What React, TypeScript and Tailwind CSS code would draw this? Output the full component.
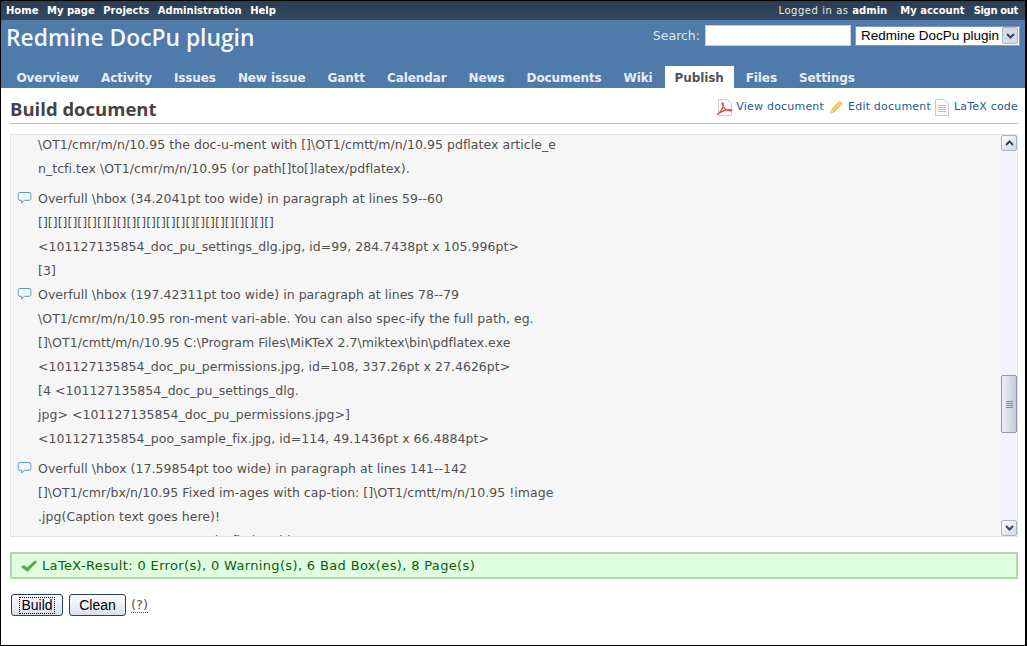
const V = '"DejaVu Sans", sans-serif';

function Line({ text, icon, gap }: { text: string; icon?: boolean; gap?: boolean }) {
  return (
    <div className={`relative h-[24px] pl-[27px] leading-[24px] whitespace-pre ${gap ? 'mt-[6px]' : ''}`}>
      {icon && <Bubble />}
      {text}
    </div>
  );
}

function Bubble() {
  return (
    <svg className="absolute left-[6px] top-[4px]" width="15" height="14" viewBox="0 0 15 14">
      <path d="M3 1.500h9a1.800 1.800 0 0 1 1.800 1.800v4.200a1.800 1.800 0 0 1-1.800 1.800H7.500l-3 2.700.4-2.700H3A1.800 1.800 0 0 1 1.200 7.500V3.300A1.800 1.800 0 0 1 3 1.500z" fill="#f2f8fd" stroke="#5b9bd0" strokeWidth="1" />
    </svg>
  );
}

function PdfIcon() {
  return (
    <svg width="17" height="17" viewBox="0 0 17 17">
      <path d="M2.500.500h9l4 4v12h-13z" fill="#fdfbfb" stroke="#d2cccc" />
      <path d="M1 15.500c3.500-1.500 6-6 6.300-10 .1-2-1.200-2-1.100-.5.300 3.500 4 6.800 8.800 6.800 1 0 1-1.100 0-1.100-3.500-.2-8.500 1-14 4.800z" fill="none" stroke="#d0564a" strokeWidth="1.300" />
    </svg>
  );
}

function PencilIcon() {
  return (
    <svg width="14" height="15" viewBox="0 0 14 15">
      <path d="M10.500 1.500l2.500 2L4.800 12 1.500 13.500l1-3.600z" fill="#f5d563" stroke="#c99b2e" strokeWidth="0.800" />
      <path d="M2.500 10l2.300 2-3.300 1.500z" fill="#efe2bd" />
    </svg>
  );
}

function DocIcon() {
  return (
    <svg width="14" height="17" viewBox="0 0 14 17">
      <path d="M.500.500h9l4 4v12H.500z" fill="#fafafa" stroke="#c8c8c8" />
      <path d="M3 6.500h8M3 8.500h8M3 10.500h8M3 12.500h8" stroke="#c4c4c4" />
    </svg>
  );
}

function Check() {
  return (
    <svg width="18" height="14" viewBox="0 0 18 14">
      <path d="M1 8l3-2 3 2.500L15 1.500l2 1.500-9.500 9.800z" fill="#5aa64e" stroke="#93c98a" strokeWidth="0.600" />
    </svg>
  );
}

function Chevron({ up }: { up?: boolean }) {
  return (
    <svg width="9" height="6" viewBox="0 0 9 6">
      <path d={up ? 'M1 5l3.500-3.500L8 5' : 'M1 1l3.500 3.500L8 1'} fill="none" stroke="#3b4358" strokeWidth="2" />
    </svg>
  );
}

function ScrollBtn({ up }: { up?: boolean }) {
  return (
    <div className="flex h-[16px] w-[16px] shrink-0 items-center justify-center rounded-[2px] border border-[#a9b4c4] bg-[linear-gradient(135deg,#fdfdfd,#cfd8e6)]">
      <Chevron up={up} />
    </div>
  );
}

const tabs = ['Overview', 'Activity', 'Issues', 'New issue', 'Gantt', 'Calendar', 'News', 'Documents', 'Wiki', 'Publish', 'Files', 'Settings'];

const lines: { t: string; i?: boolean; g?: boolean }[] = [
  { t: '\\OT1/cmr/m/n/10.95 the doc-u-ment with []\\OT1/cmtt/m/n/10.95 pdflatex article_e' },
  { t: 'n_tcfi.tex \\OT1/cmr/m/n/10.95 (or path[]to[]latex/pdflatex).' },
  { t: 'Overfull \\hbox (34.2041pt too wide) in paragraph at lines 59--60', i: true, g: true },
  { t: '[][][][][][][][][][][][][][][][][][][][][][][][]' },
  { t: '<101127135854_doc_pu_settings_dlg.jpg, id=99, 284.7438pt x 105.996pt>' },
  { t: '[3]' },
  { t: 'Overfull \\hbox (197.42311pt too wide) in paragraph at lines 78--79', i: true },
  { t: '\\OT1/cmr/m/n/10.95 ron-ment vari-able. You can also spec-ify the full path, eg.' },
  { t: '[]\\OT1/cmtt/m/n/10.95 C:\\Program Files\\MiKTeX 2.7\\miktex\\bin\\pdflatex.exe' },
  { t: '<101127135854_doc_pu_permissions.jpg, id=108, 337.26pt x 27.4626pt>' },
  { t: '[4 <101127135854_doc_pu_settings_dlg.' },
  { t: 'jpg> <101127135854_doc_pu_permissions.jpg>]' },
  { t: '<101127135854_poo_sample_fix.jpg, id=114, 49.1436pt x 66.4884pt>' },
  { t: 'Overfull \\hbox (17.59854pt too wide) in paragraph at lines 141--142', i: true, g: true },
  { t: '[]\\OT1/cmr/bx/n/10.95 Fixed im-ages with cap-tion: []\\OT1/cmtt/m/n/10.95 !image' },
  { t: '.jpg(Caption text goes here)!' },
  { t: '<101127135854_poo_sample_fix.jpg, id=117, 49.1436pt x 66.4884pt>' },
];

export default function App() {
  return (
    <div className="flex h-[646px] w-[1027px] flex-col overflow-hidden border border-r-2 border-black bg-white" style={{ fontFamily: V }}>
      <div className="flex h-[19px] shrink-0 items-center justify-between bg-[linear-gradient(#2a3d52,#34495f)] pl-[5px] pr-[7px] text-[10px] font-bold text-white">
        <div className="flex gap-[8.500px]">
          <span>Home</span><span>My page</span><span>Projects</span><span>Administration</span><span>Help</span>
        </div>
        <div className="flex gap-[13px]">
          <span className="font-normal tracking-[0.55px] text-[#e8e8e8]">Logged in as <b className="tracking-normal text-white">admin</b></span>
          <div className="flex gap-[9px]"><span>My account</span><span className="tracking-[-0.35px]">Sign out</span></div>
        </div>
      </div>
      <div className="flex h-[68px] shrink-0 flex-col bg-[#507aaa]">
        <div className="flex h-[46px] items-start justify-between pl-[5px] pr-[5px]">
          <div className="pt-[2px] text-[22.800px] font-semibold leading-[32px] text-[#f4f8fc]" style={{ fontFamily: '"Open Sans", sans-serif' }}>Redmine DocPu plugin</div>
          <div className="flex items-center pt-[5px]">
            <span className="mr-[5px] pt-[1px] text-[12.500px] text-[#dce6f0]">Search:</span>
            <div className="h-[21px] w-[146px] border border-[#c3cfdc] bg-white" />
            <div className="ml-[4px] flex h-[20px] w-[165px] items-center justify-between border border-[#7f9db9] bg-white pl-[5px] pr-[1px] text-[13.500px] whitespace-nowrap text-black" style={{ fontFamily: '"Liberation Sans", sans-serif' }}>
              <span className="pt-[1px]">Redmine DocPu plugin</span>
              <div className="flex h-[17px] w-[16px] shrink-0 items-center justify-center rounded-[2px] border border-[#a9b4c4] bg-[#d5dce8]"><Chevron /></div>
            </div>
          </div>
        </div>
        <div className="flex h-[22px] items-end pl-[4.500px] text-[12px] font-bold leading-[24px] tracking-[-0.1px] text-[#e6eef6]">
          {tabs.map((t) => (
            <div key={t} className={t === 'Publish' ? 'ml-[1px] mr-[1px] h-[22px] bg-white px-[10px] text-[#555]' : 'h-[22px] px-[11px]'}>{t}</div>
          ))}
        </div>
      </div>
      <div className="flex min-h-0 flex-1 flex-col pl-[9px] pr-[7px] pb-[29px]">
        <div className="mt-[1px] flex h-[35px] shrink-0 items-center justify-between border-b border-[#bbb] pt-[8px] pb-[2px]">
          <div className="text-[18.500px] font-bold text-[#444]" style={{ fontFamily: '"Open Sans", sans-serif' }}>Build document</div>
          <div className="mb-[4px] flex items-center text-[11px] tracking-[0.2px] text-[#2a5a8a]">
            <PdfIcon /><span className="ml-[3px]">View document</span>
            <span className="ml-[5px]"><PencilIcon /></span><span className="ml-[5px]">Edit document</span>
            <span className="ml-[4px]"><DocIcon /></span><span className="ml-[5px]">LaTeX code</span>
          </div>
        </div>
        <div className="mt-[10px] flex h-[403px] shrink-0 border border-[#e4e4e4] bg-[#f6f6f6]">
          <div className="min-w-0 flex-1 overflow-hidden">
            <div className="-mt-[2px] text-[12.500px] tracking-[0.04px] text-[#505050]">
              {lines.map((l, i) => <Line key={i} text={l.t} icon={l.i} gap={l.g} />)}
            </div>
          </div>
          <div className="flex w-[16px] shrink-0 flex-col bg-[#f3f4fa]">
            <ScrollBtn up />
            <div className="min-h-0 flex-1 pt-[224px]">
              <div className="flex h-[58px] flex-col items-center justify-center gap-[1px] rounded-[2px] border border-[#8d97a8] bg-[linear-gradient(90deg,#eef0f5,#c3c9d6)]">
                <div className="h-px w-[7px] bg-[#888]" /><div className="h-px w-[7px] bg-[#888]" /><div className="h-px w-[7px] bg-[#888]" /><div className="h-px w-[7px] bg-[#888]" />
              </div>
            </div>
            <ScrollBtn />
          </div>
        </div>
        <div className="mt-[15px] flex h-[27px] shrink-0 items-center gap-[4px] border-2 border-[#afd6a8] bg-[#dfffdf] pl-[8px] text-[13px] tracking-[0.35px] text-[#105a10]">
          <Check />
          <span>LaTeX-Result: 0 Error(s), 0 Warning(s), 6 Bad Box(es), 8 Page(s)</span>
        </div>
        <div className="mt-[15px] flex items-center pl-[1px]">
          <div className="flex h-[22px] w-[52px] items-center justify-center rounded-[3px] border border-[#1f3f6f] bg-[linear-gradient(#fff,#dbe0ee)] text-[14px] text-black" style={{ fontFamily: '"Liberation Sans", sans-serif' }}>
            <span className="border border-dotted border-black px-[1px] leading-[15px]">Build</span>
          </div>
          <div className="ml-[6px] flex h-[22px] w-[57px] items-center justify-center rounded-[3px] border border-[#27405f] bg-[linear-gradient(#fff,#dbe0ee)] text-[14px] text-black" style={{ fontFamily: '"Liberation Sans", sans-serif' }}>Clean</div>
          <span className="ml-[5px] border-b border-dotted border-[#555] text-[13px] leading-[14px] text-[#555]">(?)</span>
        </div>
      </div>
    </div>
  );
}
